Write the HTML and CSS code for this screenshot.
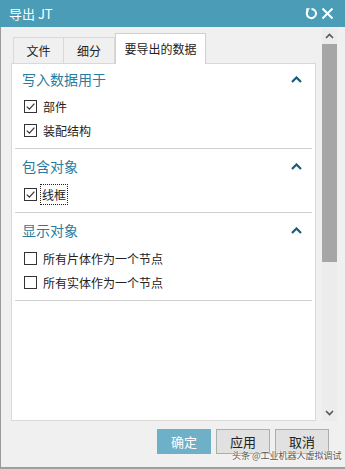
FILE: index.html
```html
<!DOCTYPE html>
<html lang="zh">
<head>
<meta charset="utf-8">
<title>导出 JT</title>
<link rel="stylesheet" href="styles.css">
</head>
<body>
<div class="dialog">
  <div class="titlebar">
    <span class="title">导出 JT</span>
    <div class="title-icons">
      <svg class="ic" width="13" height="13" viewBox="0 0 13 13"><path d="M3.2 3.2 A4.6 4.6 0 1 0 6.5 1.9" fill="none" stroke="#fff" stroke-width="2"/><path d="M1.2 1.2 L5.2 1.2 L1.2 5.2 Z" fill="#fff"/></svg>
      <svg class="ic" width="13" height="13" viewBox="0 0 13 13"><path d="M1.5 1.5 L11.5 11.5 M11.5 1.5 L1.5 11.5" stroke="#fff" stroke-width="2"/></svg>
    </div>
  </div>
  <div class="main">
    <div class="content">
      <div class="tabs">
        <div class="tab">文件</div>
        <div class="tab">细分</div>
        <div class="tab active">要导出的数据</div>
      </div>
      <div class="panel">
        <div class="section">
          <div class="sec-head"><span>写入数据用于</span><svg class="caret" width="11" height="7" viewBox="0 0 11 7"><path d="M1 6 L5.5 1.5 L10 6" fill="none" stroke="#1d5c78" stroke-width="2.2"/></svg></div>
          <label class="row"><span class="box checked"><svg width="11" height="11" viewBox="0 0 11 11"><path d="M1.8 5.6 L4.4 8.2 L9.4 2.6" fill="none" stroke="#333" stroke-width="1.2"/></svg></span><span>部件</span></label>
          <label class="row"><span class="box checked"><svg width="11" height="11" viewBox="0 0 11 11"><path d="M1.8 5.6 L4.4 8.2 L9.4 2.6" fill="none" stroke="#333" stroke-width="1.2"/></svg></span><span>装配结构</span></label>
        </div>
        <div class="section">
          <div class="sec-head"><span>包含对象</span><svg class="caret" width="11" height="7" viewBox="0 0 11 7"><path d="M1 6 L5.5 1.5 L10 6" fill="none" stroke="#1d5c78" stroke-width="2.2"/></svg></div>
          <label class="row"><span class="box checked"><svg width="11" height="11" viewBox="0 0 11 11"><path d="M1.8 5.6 L4.4 8.2 L9.4 2.6" fill="none" stroke="#333" stroke-width="1.2"/></svg></span><span class="focus">线框</span></label>
        </div>
        <div class="section">
          <div class="sec-head"><span>显示对象</span><svg class="caret" width="11" height="7" viewBox="0 0 11 7"><path d="M1 6 L5.5 1.5 L10 6" fill="none" stroke="#1d5c78" stroke-width="2.2"/></svg></div>
          <label class="row"><span class="box"></span><span>所有片体作为一个节点</span></label>
          <label class="row"><span class="box"></span><span>所有实体作为一个节点</span></label>
        </div>
      </div>
    </div>
    <div class="scrollbar">
      <div class="arrow"><svg width="9" height="6" viewBox="0 0 9 6"><path d="M1 5 L4.5 1.5 L8 5" fill="none" stroke="#555" stroke-width="1.6"/></svg></div>
      <div class="thumb"></div>
      <div class="track"></div>
      <div class="arrow"><svg width="9" height="6" viewBox="0 0 9 6"><path d="M1 1 L4.5 4.5 L8 1" fill="none" stroke="#555" stroke-width="1.6"/></svg></div>
    </div>
  </div>
  <div class="buttons">
    <button class="btn primary">确定</button>
    <button class="btn">应用</button>
    <button class="btn">取消</button>
  </div>
  <div class="watermark">头条 @工业机器人虚拟调试</div>
</div>
</body>
</html>
```
FILE: styles.css
```css
html, body {
  margin: 0;
  padding: 0;
  background: #f0f0f0;
}
body {
  width: 345px;
  height: 469px;
  overflow: hidden;
  font-family: "Noto Sans CJK SC", "Noto Sans", sans-serif;
  color: #222;
}
.dialog {
  position: relative;
  width: 345px;
  height: 469px;
  box-sizing: border-box;
  border-left: 1px solid #9a9a9a;
  border-bottom: 2px solid #a0a0a0;
  background: #f0f0f0;
  display: flex;
  flex-direction: column;
}
.titlebar {
  height: 27px;
  margin-left: -1px;
  background: #4b9cb7;
  display: flex;
  align-items: center;
  justify-content: space-between;
  padding: 0 11px 0 9px;
  flex: none;
}
.title {
  color: #fff;
  font-size: 13px;
  line-height: 27px;
}
.title-icons {
  display: flex;
  gap: 3px;
  align-items: center;
}
.main {
  display: flex;
  height: 394px;
  flex: none;
}
.content {
  margin-left: 10px;
  width: 305px;
  display: flex;
  flex-direction: column;
}
.tabs {
  display: flex;
  align-items: flex-end;
  height: 36px;
  padding-left: 2px;
}
.tab {
  height: 26px;
  box-sizing: border-box;
  border: 1px solid #d9d9d9;
  border-bottom: none;
  background: #f0f0f0;
  font-size: 12px;
  line-height: 25px;
  text-align: center;
  color: #222;
}
.tab:nth-child(1) { width: 51px; }
.tab:nth-child(2) { width: 51px; border-left: none; }
.tab.active {
  width: 91px;
  height: 31px;
  background: #fff;
  line-height: 30px;
  border-color: #d0d0d0;
  border-left: 1px solid #d0d0d0;
  margin-bottom: -1px;
  position: relative;
  z-index: 1;
}
.panel {
  background: #fff;
  border: 1px solid #d9d9d9;
  height: 358px;
  box-sizing: border-box;
  padding: 0 3px 0 3px;
}
.section {
  border-bottom: 1px solid #cfcfcf;
  padding-bottom: 6px;
}
.sec-head {
  height: 30px;
  display: flex;
  align-items: center;
  justify-content: space-between;
  padding: 0 10px 0 7px;
  color: #2a7c9c;
  font-size: 14px;
}
.section + .section .sec-head {
  height: 32px;
  padding-top: 1px;
}
.caret {
  display: block;
}
.row {
  height: 24px;
  display: flex;
  align-items: center;
  padding-left: 9px;
  font-size: 12px;
  color: #222;
  gap: 6px;
}
.box {
  width: 13px;
  height: 13px;
  box-sizing: border-box;
  border: 1px solid #333;
  background: #fff;
  display: flex;
  align-items: center;
  justify-content: center;
}
.box svg { display: block; }
.focus {
  outline: 1px dotted #222;
  outline-offset: 0;
  padding: 1px 1px;
  margin-left: -2px;
}
.scrollbar {
  margin-left: 6px;
  width: 15px;
  display: flex;
  flex-direction: column;
  background: #ececec;
  margin-top: 1px;
}
.arrow {
  height: 16px;
  display: flex;
  align-items: center;
  justify-content: center;
}
.thumb {
  height: 218px;
  background: #a6a6a6;
  flex: none;
}
.track { flex: 1; }
.buttons {
  display: flex;
  justify-content: flex-end;
  gap: 5px;
  padding: 8px 16px 0 0;
}
.btn {
  width: 54px;
  height: 25px;
  box-sizing: border-box;
  border: 1px solid #adadad;
  background: #e1e1e1;
  font-family: "Noto Sans CJK SC", sans-serif;
  font-size: 13px;
  color: #222;
  padding: 0;
  margin: 0;
}
.btn.primary {
  background: #6eb0c8;
  border-color: #6eb0c8;
  color: #fff;
}
.watermark {
  position: absolute;
  left: 231px;
  top: 450px;
  font-size: 9px;
  line-height: 11px;
  color: #555;
  text-shadow: 0 0 2px #fff, 0 0 2px #fff;
  white-space: nowrap;
}
```
